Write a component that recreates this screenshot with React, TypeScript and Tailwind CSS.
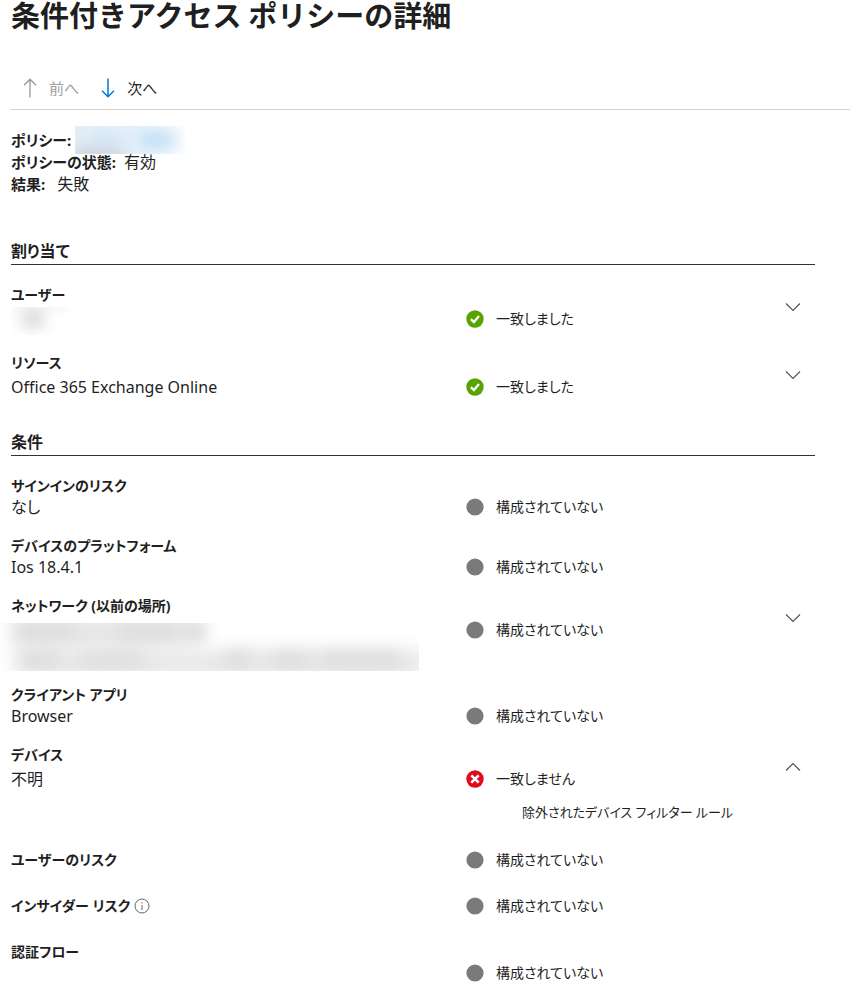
import React, { useState } from 'react';

type Status = 'matched' | 'unmatched' | 'unconfigured';

interface PolicyRow {
  label: string;
  value?: React.ReactNode;
  status: Status;
  expandable?: boolean;
  expanded?: boolean;
  detail?: string;
  info?: boolean;
  statusBelow?: boolean;
}

const STATUS_TEXT: Record<Status, string> = {
  matched: '一致しました',
  unmatched: '一致しません',
  unconfigured: '構成されていない',
};

const assignments: PolicyRow[] = [
  { label: 'ユーザー', value: <RedactedUser />, status: 'matched', expandable: true },
  { label: 'リソース', value: 'Office 365 Exchange Online', status: 'matched', expandable: true },
];

const conditions: PolicyRow[] = [
  { label: 'サインインのリスク', value: 'なし', status: 'unconfigured' },
  { label: 'デバイスのプラットフォーム', value: 'Ios 18.4.1', status: 'unconfigured' },
  { label: 'ネットワーク (以前の場所)', value: <RedactedNetwork />, status: 'unconfigured', expandable: true },
  { label: 'クライアント アプリ', value: 'Browser', status: 'unconfigured' },
  {
    label: 'デバイス',
    value: '不明',
    status: 'unmatched',
    expandable: true,
    expanded: true,
    detail: '除外されたデバイス フィルター ルール',
  },
  { label: 'ユーザーのリスク', status: 'unconfigured' },
  { label: 'インサイダー リスク', status: 'unconfigured', info: true },
  { label: '認証フロー', status: 'unconfigured', statusBelow: true },
];

function RedactedPolicy() {
  return (
    <span className="relative inline-block h-7 w-[110px] overflow-hidden bg-gradient-to-r from-[#e4edf5] via-[#e9f2fa] to-white">
      <span className="absolute left-0 top-6 h-2 w-12 bg-[#b9c1c9] blur-[7px]"></span>
      <span className="absolute left-4 top-2 h-2 w-8 bg-[#c3ddf4] blur-[8px]"></span>
      <span className="absolute left-16 top-2 h-3 w-9 bg-[#9fcdf0] blur-[9px]"></span>
    </span>
  );
}

function RedactedUser() {
  return (
    <span className="relative -mb-1 block h-7 w-[72px] overflow-hidden">
      <span className="absolute left-0 top-0 h-1 w-14 bg-[#f4f4f4] blur-[3px]"></span>
      <span className="absolute left-3 top-1 h-4 w-5 bg-[#cfcfcf] blur-[8px]"></span>
    </span>
  );
}

function RedactedNetwork() {
  return (
    <span className="relative -mb-2 -ml-[11px] mt-[5px] block h-12 w-[419px] overflow-hidden">
      <span className="absolute -top-2 left-3 h-8 w-48 bg-[#e6e6e6] blur-[9px]"></span>
      <span className="absolute left-4 top-7 h-6 w-[410px] bg-[#e6e6e6] blur-[9px]"></span>
      <span className="absolute left-4 top-1 h-2 w-14 bg-[#d2d2d2] blur-[9px]"></span>
      <span className="absolute left-[120px] top-1 h-2 w-14 bg-[#d2d2d2] blur-[9px]"></span>
      <span className="absolute left-48 top-1 h-2 w-3 bg-[#cccccc] blur-[7px]"></span>
      <span className="absolute left-5 top-8 h-2 w-10 bg-[#cccccc] blur-[9px]"></span>
      <span className="absolute left-20 top-8 h-2 w-16 bg-[#cfcfcf] blur-[9px]"></span>
      <span className="absolute left-56 top-8 h-2 w-7 bg-[#cccccc] blur-[9px]"></span>
      <span className="absolute left-[272px] top-8 h-2 w-9 bg-[#cccccc] blur-[9px]"></span>
      <span className="absolute left-80 top-8 h-2 w-20 bg-[#cecece] blur-[9px]"></span>
    </span>
  );
}

function StatusIcon({ status }: { status: Status }) {
  if (status === 'matched') {
    return (
      <svg viewBox="0 0 18 18" className="h-[18px] w-[18px] shrink-0" aria-hidden="true">
        <circle cx="9" cy="9" r="8.7" fill="#57a300" />
        <path d="M4.8 9.2 7.9 12.1 13 6.1" fill="none" stroke="#fff" strokeWidth="2.3" />
      </svg>
    );
  }
  if (status === 'unmatched') {
    return (
      <svg viewBox="0 0 18 18" className="h-[18px] w-[18px] shrink-0" aria-hidden="true">
        <circle cx="9" cy="9" r="8.7" fill="#e00b1c" />
        <path d="M5.3 5.3 12.7 12.7M12.7 5.3 5.3 12.7" fill="none" stroke="#fff" strokeWidth="2.6" />
      </svg>
    );
  }
  return (
    <svg viewBox="0 0 18 18" className="h-[18px] w-[18px] shrink-0" aria-hidden="true">
      <circle cx="9" cy="9" r="8.6" fill="#7a7a7a" />
    </svg>
  );
}

function Row({ row }: { row: PolicyRow }) {
  const [open, setOpen] = useState(Boolean(row.expanded));
  const below = row.value !== undefined || row.statusBelow;
  const lineHeight = !below || row.expandable ? 'leading-6' : 'leading-[18px]';

  return (
    <div className={`flex min-h-[46px] items-start ${row.expandable ? 'pb-5' : 'pb-[18px]'}`}>
      <div className="min-w-0 flex-[455]">
        <div className="flex items-center gap-1 font-bold leading-6">
          {row.label}
          {row.info && (
            <button type="button" aria-label="情報">
              <svg viewBox="0 0 16 16" className="h-4 w-4" fill="none" stroke="#666" aria-hidden="true">
                <circle cx="8" cy="8" r="7" />
                <path d="M8 7v5M8 4.2v1.4" />
              </svg>
            </button>
          )}
        </div>
        {row.value !== undefined && <div className={`text-base ${lineHeight}`}>{row.value}</div>}
      </div>

      <div className={below ? 'min-w-0 flex-[319] pt-6' : 'min-w-0 flex-[319]'}>
        <div className={`flex items-center gap-3 ${lineHeight}`}>
          <StatusIcon status={row.status} />
          <span>{STATUS_TEXT[row.status]}</span>
        </div>
        {open && row.detail && <p className="pb-1 pl-14 pt-[9px] text-[13px] leading-6">{row.detail}</p>}
      </div>

      <div className="w-[30px] shrink-0">
        {row.expandable && (
          <button
            type="button"
            aria-expanded={open}
            aria-label={row.label}
            onClick={() => setOpen(!open)}
            className="flex h-12 items-center"
          >
            <svg viewBox="0 0 16 10" className="h-[10px] w-4" fill="none" stroke="#555" strokeWidth="1.2" aria-hidden="true">
              <path d={open ? 'M1 8.5 8 1.5 15 8.5' : 'M1 1.5 8 8.5 15 1.5'} />
            </svg>
          </button>
        )}
      </div>
    </div>
  );
}

function Section({ title, rows }: { title: string; rows: PolicyRow[] }) {
  return (
    <section className="mr-[35px]">
      <h2 className="mb-[18px] border-b border-[#333] pb-px text-base font-bold leading-6">{title}</h2>
      {rows.map(row => (
        <Row key={row.label} row={row} />
      ))}
    </section>
  );
}

export default function App() {
  return (
    <main className="bg-white pl-[11px] font-['Noto_Sans','Noto_Sans_CJK_JP',sans-serif] text-sm text-[#1f1f1f] [font-feature-settings:'palt']">
      <h1 className="font-['Noto_Sans_CJK_JP',sans-serif] text-[29px] font-bold leading-7 [font-feature-settings:normal]">
        条件付きアクセス ポリシーの詳細
      </h1>

      {/* Previous / next policy */}
      <div className="mt-10 flex h-[42px] items-center gap-[22px] border-b border-[#d2d2d2] pl-3 text-[15px]">
        <button type="button" disabled className="flex items-center gap-3 text-[#a0a0a0]">
          <svg viewBox="0 0 14 20" className="h-5 w-[14px]" fill="none" stroke="#999" strokeWidth="1.3" aria-hidden="true">
            <path d="M7 19.5V1.2M1 7.2 7 1.2 13 7.2" />
          </svg>
          前へ
        </button>
        <button type="button" className="flex items-center gap-3">
          <svg viewBox="0 0 14 20" className="h-5 w-[14px]" fill="none" stroke="#0078d4" strokeWidth="1.5" aria-hidden="true">
            <path d="M7 .5V18.8M1 12.8 7 18.8 13 12.8" />
          </svg>
          次へ
        </button>
      </div>

      {/* Policy summary */}
      <dl className="mb-11 mt-[19px] text-base leading-[22px]">
        <div className="flex h-[22px] items-center gap-1">
          <dt className="text-[15px] font-bold">ポリシー:</dt>
          <dd className="h-7">
            <RedactedPolicy />
          </dd>
        </div>
        <div className="flex gap-2">
          <dt className="text-[15px] font-bold">ポリシーの状態:</dt>
          <dd>有効</dd>
        </div>
        <div className="flex gap-3">
          <dt className="text-[15px] font-bold">結果:</dt>
          <dd>失敗</dd>
        </div>
      </dl>

      <div className="flex flex-col gap-[11px]">
        <Section title="割り当て" rows={assignments} />
        <Section title="条件" rows={conditions} />
      </div>
    </main>
  );
}
